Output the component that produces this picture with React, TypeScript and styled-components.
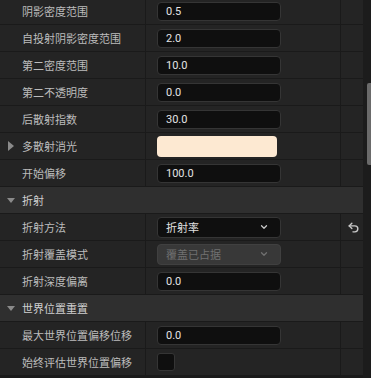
import React from 'react';
import styled, { createGlobalStyle } from 'styled-components';

const GlobalStyle = createGlobalStyle`
  html, body {
    margin: 0;
    padding: 0;
    background: #1a1a1a;
  }
  * {
    box-sizing: border-box;
  }
`

const Panel = styled.div`
  width: 371px;
  height: 378px;
  overflow: hidden;
  display: flex;
  background: #1a1a1a;
  font-family: Roboto, "Noto Sans CJK SC", sans-serif;
  font-size: 11px;
`

const Content = styled.div`
  width: 363px;
  display: flex;
  flex-direction: column;
  margin-top: -2px;
`

const Track = styled.div`
  width: 8px;
  background: #1c1c1c;
  display: flex;
  justify-content: flex-end;
`

const Thumb = styled.div`
  width: 4px;
  height: 82px;
  margin-top: 83px;
  background: #6a6a6a;
  border-radius: 2px 0 0 2px;
`

const Row = styled.div`
  height: 27px;
  flex-shrink: 0;
  display: grid;
  grid-template-columns: 146px 195px 22px;
  background: #242424;
  border-bottom: 1px solid #1a1a1a;
`

const LabelCell = styled.div`
  position: relative;
  display: flex;
  align-items: center;
  padding-left: 22px;
  color: #bcbcbc;
  border-right: 1px solid #1a1a1a;
  white-space: nowrap;
`

const ValueCell = styled.div`
  display: flex;
  align-items: center;
  padding-left: 11px;
  border-right: 1px solid #1a1a1a;
`

const ResetCell = styled.div`
  display: flex;
  align-items: center;
  justify-content: center;
  padding-left: 2px;
  color: #c8c8c8;
`

const Header = styled.div`
  height: 27px;
  flex-shrink: 0;
  display: flex;
  align-items: center;
  gap: 7px;
  padding-left: 7px;
  background: #2f2f2f;
  border-bottom: 1px solid #1a1a1a;
  color: #d0d0d0;
`

const DownArrow = styled.span`
  width: 0;
  height: 0;
  border-left: 4px solid transparent;
  border-right: 4px solid transparent;
  border-top: 5px solid #8a8a8a;
`

const SideArrow = styled.span`
  position: absolute;
  left: 8px;
  top: 50%;
  margin-top: -5px;
  width: 0;
  height: 0;
  border-top: 5px solid transparent;
  border-bottom: 5px solid transparent;
  border-left: 6px solid #8a8a8a;
`

const NumberBox = styled.div`
  width: 124px;
  height: 19px;
  display: flex;
  align-items: center;
  padding-left: 8px;
  background: #0f0f0f;
  border: 1px solid #353535;
  border-radius: 4px;
  color: #e4e4e4;
`

const Swatch = styled.div`
  width: 120px;
  height: 21px;
  background: #fde9d2;
  border-radius: 4px;
`

const Dropdown = styled.div<{ $disabled?: boolean }>`
  width: 124px;
  height: 21px;
  display: flex;
  align-items: center;
  justify-content: space-between;
  padding: 0 11px 0 8px;
  background: ${p => (p.$disabled ? '#383838' : '#0f0f0f')};
  border: 1px solid ${p => (p.$disabled ? '#404040' : '#353535')};
  border-radius: 4px;
  color: ${p => (p.$disabled ? '#707070' : '#e0e0e0')};
`

const Check = styled.div`
  width: 18px;
  height: 18px;
  background: #0f0f0f;
  border: 1px solid #353535;
  border-radius: 3px;
`

const Chevron = ({ color }: { color: string }) => (
  <svg width="10" height="10" viewBox="0 0 24 24" fill="none" stroke={color} strokeWidth="3" strokeLinecap="round" strokeLinejoin="round">
    <path d="m6 9 6 6 6-6" />
  </svg>
);

const ResetIcon = () => (
  <svg width="13" height="13" viewBox="0 0 24 24" fill="none" stroke="currentColor" strokeWidth="2.6" strokeLinecap="round" strokeLinejoin="round">
    <path d="M9 14 4 9l5-5" />
    <path d="M4 9h10.5a5.5 5.5 0 0 1 5.5 5.5a5.5 5.5 0 0 1-5.5 5.5H11" />
  </svg>
);

type Prop = {
  label: string;
  value: React.ReactNode;
  expandable?: boolean;
  reset?: boolean;
};

const Property = ({ label, value, expandable, reset }: Prop) => (
  <Row>
    <LabelCell>
      {expandable && <SideArrow />}
      {label}
    </LabelCell>
    <ValueCell>{value}</ValueCell>
    <ResetCell>{reset && <ResetIcon />}</ResetCell>
  </Row>
);

const Section = ({ title }: { title: string }) => (
  <Header>
    <DownArrow />
    {title}
  </Header>
);

const numbers = [
  ['阴影密度范围', '0.5'],
  ['自投射阴影密度范围', '2.0'],
  ['第二密度范围', '10.0'],
  ['第二不透明度', '0.0'],
  ['后散射指数', '30.0'],
];

const App = () => {
  return (
    <Panel>
      <GlobalStyle />
      <Content>
        {numbers.map(([label, v]) => (
          <Property key={label} label={label} value={<NumberBox>{v}</NumberBox>} />
        ))}
        <Property label="多散射消光" expandable value={<Swatch />} />
        <Property label="开始偏移" value={<NumberBox>100.0</NumberBox>} />
        <Section title="折射" />
        <Property
          label="折射方法"
          reset
          value={<Dropdown>折射率<Chevron color="#c8c8c8" /></Dropdown>}
        />
        <Property
          label="折射覆盖模式"
          value={<Dropdown $disabled>覆盖已占据<Chevron color="#707070" /></Dropdown>}
        />
        <Property label="折射深度偏离" value={<NumberBox>0.0</NumberBox>} />
        <Section title="世界位置重置" />
        <Property label="最大世界位置偏移位移" value={<NumberBox>0.0</NumberBox>} />
        <Property label="始终评估世界位置偏移" value={<Check />} />
      </Content>
      <Track>
        <Thumb />
      </Track>
    </Panel>
  );
};

export default App;
